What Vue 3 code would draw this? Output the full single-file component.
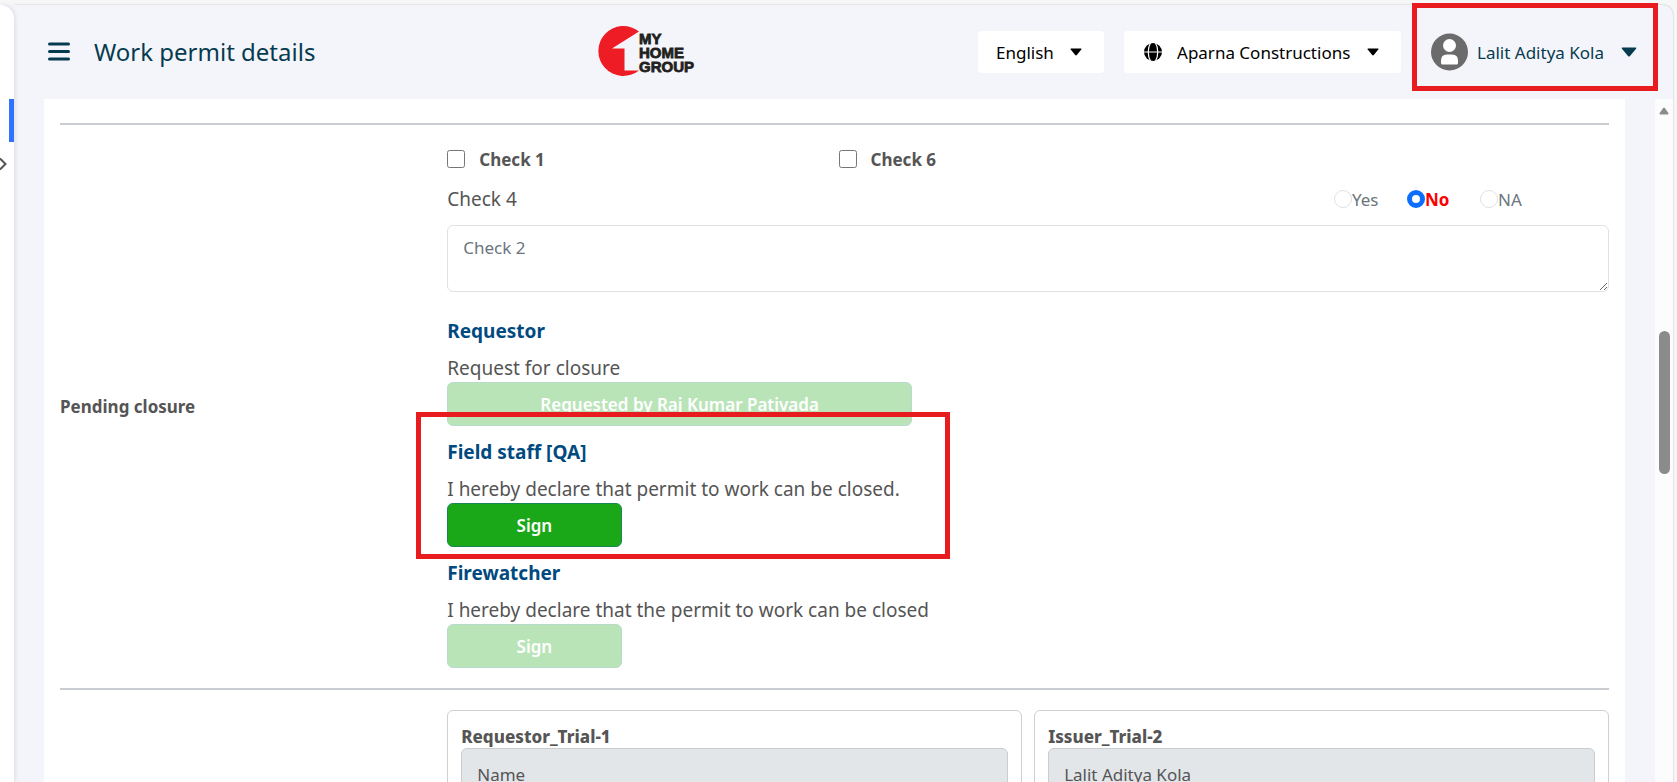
<script setup>
import { ref } from 'vue'

const language = ref('English')
const company = ref('Aparna Constructions')
const answer = ref('No')
const remarks = ref('Check 2')
const checks = ref([
  { id: 'check-1', label: 'Check 1', done: false },
  { id: 'check-6', label: 'Check 6', done: false },
])
const answers = ['Yes', 'No', 'NA']
const signers = [
  { role: 'Requestor', text: 'Request for closure', action: 'Requested by Raj Kumar Pativada', wide: true, disabled: true },
  { role: 'Field staff [QA]', text: 'I hereby declare that permit to work can be closed.', action: 'Sign', disabled: false, marked: true },
  { role: 'Firewatcher', text: 'I hereby declare that the permit to work can be closed', action: 'Sign', disabled: true },
]
const people = [
  { id: 'requestor', title: 'Requestor_Trial-1', name: 'Name' },
  { id: 'issuer', title: 'Issuer_Trial-2', name: 'Lalit Aditya Kola' },
]
</script>

<template>
  <div class="shell">
    <aside class="sidebar">
      <span class="sidebar-active"></span>
      <button class="sidebar-expand" type="button" aria-label="Expand">
        <svg width="8" height="14" viewBox="0 0 8 14"><path d="M0 1.500 L5.500 7 L0 12.500" fill="none" stroke="#555" stroke-width="2" /></svg>
      </button>
    </aside>

    <div class="main">
      <header class="header">
        <div class="heading">
          <button class="menu" type="button" aria-label="Menu">
            <svg width="22" height="20" viewBox="0 0 22 20"><path d="M1.500 2h19M1.500 9.500h19M1.500 17h19" stroke="#063b4f" stroke-width="3" stroke-linecap="round" /></svg>
          </button>
          <h1>Work permit details</h1>
        </div>

        <svg class="logo" width="97" height="52" viewBox="0 0 97 52" role="img" aria-label="My Home Group">
          <path d="M41 5.500 A25 25 0 1 0 41 44.500 H26.500 V22.500 H14 Z" fill="#ee1c25" />
          <g class="logo-text">
            <text x="41" y="18">MY</text>
            <text x="41" y="32">HOME</text>
            <text x="41" y="46">GROUP</text>
          </g>
        </svg>

        <div class="tools">
          <div class="picker">
            <select v-model="language" aria-label="Language">
              <option>English</option>
            </select>
            <svg class="caret" width="12" height="8" viewBox="0 0 12 8"><path d="M1.200.5h9.600q1.200 0 .5 1L6.800 7q-.8.8-1.600 0L.7 1.500Q0 .5 1.200.5Z" /></svg>
          </div>
          <div class="picker">
            <svg class="globe" width="18" height="18" viewBox="0 0 18 18">
              <circle cx="9" cy="9" r="9" />
              <path d="M0 9h18M6.500 0C3.500 5 3.500 13 6.500 18M11.500 0c3 5 3 13 0 18" fill="none" stroke="#fff" stroke-width="1.200" />
            </svg>
            <select v-model="company" aria-label="Company">
              <option>Aparna Constructions</option>
            </select>
            <svg class="caret" width="12" height="8" viewBox="0 0 12 8"><path d="M1.200.5h9.600q1.200 0 .5 1L6.800 7q-.8.8-1.600 0L.7 1.500Q0 .5 1.200.5Z" /></svg>
          </div>
          <button class="user" type="button">
            <svg width="37" height="38" viewBox="0 0 37 38">
              <circle cx="18.500" cy="19" r="18.500" fill="#6b6b6b" />
              <circle cx="18.500" cy="12.500" r="6.500" fill="#fff" />
              <path d="M10 30v-2.500q0-6 6-6h5q6 0 6 6V30q0 1.500-1.500 1.500h-14Q10 31.500 10 30Z" fill="#fff" />
            </svg>
            <span>Lalit Aditya Kola</span>
            <svg class="user-caret" width="16" height="10" viewBox="0 0 16 10"><path d="M1.500.5h13q1.500 0 .6 1.200L9 9q-1 1-2 0L.9 1.700Q0 .5 1.500.5Z" fill="#063b4f" /></svg>
          </button>
        </div>
      </header>

      <div class="body">
        <main class="panel">
          <section class="row">
            <h2 class="row-title">Pending closure</h2>
            <div class="row-content">
              <div class="checks">
                <label v-for="c in checks" :key="c.id" class="check">
                  <input v-model="c.done" type="checkbox" />
                  <span>{{ c.label }}</span>
                </label>
              </div>

              <div class="question">
                <span id="question-label">Check 4</span>
                <div class="answers" role="radiogroup" aria-labelledby="question-label">
                  <label v-for="a in answers" :key="a" :class="{ chosen: a === answer }">
                    <input v-model="answer" type="radio" name="check-4" :value="a" />{{ a }}
                  </label>
                </div>
              </div>

              <textarea v-model="remarks" class="remarks" aria-label="Check 2"></textarea>

              <div class="signers">
                <div v-for="s in signers" :key="s.role" class="signer" :class="{ marked: s.marked }">
                  <h3>{{ s.role }}</h3>
                  <p>{{ s.text }}</p>
                  <button type="button" :class="{ wide: s.wide }" :disabled="s.disabled">{{ s.action }}</button>
                </div>
              </div>
            </div>
          </section>

          <section class="row">
            <div></div>
            <div class="people">
              <div v-for="p in people" :key="p.id" class="person">
                <label :for="p.id">{{ p.title }}</label>
                <input :id="p.id" type="text" :value="p.name" disabled />
              </div>
            </div>
          </section>
        </main>

        <div class="scrollbar" aria-hidden="true">
          <svg width="10" height="8" viewBox="0 0 10 8"><path d="M5 1.500 L8.500 6.500 H1.500Z" fill="#8b8b8b" stroke="#8b8b8b" stroke-width="2" stroke-linejoin="round" /></svg>
          <span class="thumb"></span>
        </div>
      </div>
    </div>
  </div>
</template>

<style>
body {
  margin: 0;
  background: #f7f7f7;
}
</style>

<style scoped>
*,
*::before,
*::after {
  box-sizing: border-box;
}
.shell {
  display: flex;
  height: 100vh;
  padding: 5px 4px 0 0;
  overflow: hidden;
  font-family: "Noto Sans", "Open Sans", sans-serif;
  color: #555;
}
button,
select,
input,
textarea {
  font: inherit;
  color: inherit;
}
.sidebar {
  flex: none;
  position: relative;
  z-index: 1;
  display: flex;
  flex-direction: column;
  width: 14px;
  padding-top: 94px;
  background: #fff;
  border-radius: 0 16px 0 0;
  box-shadow: 1px 0 5px rgba(60, 70, 100, 0.14);
}
.shell::before {
  content: "";
  position: absolute;
  z-index: 0;
  width: 20px;
  height: 40px;
  background: #f4f5fa;
}
.sidebar-active {
  width: 5px;
  height: 43px;
  margin-left: auto;
  background: #2f74ff;
}
.sidebar-expand {
  display: flex;
  width: 8px;
  margin-top: 15px;
  padding: 0;
  border: 0;
  background: none;
}
.main {
  flex: 1;
  min-width: 0;
  display: flex;
  flex-direction: column;
  background: #f4f5fa;
  border-radius: 0 10px 0 0;
  box-shadow: 0 0 2px rgba(0, 0, 0, 0.25);
}
.header {
  flex: none;
  display: flex;
  align-items: center;
  justify-content: space-between;
  height: 94px;
  padding: 0 36px 0 34px;
}
.heading {
  display: flex;
  align-items: center;
  gap: 24px;
}
.heading h1 {
  margin: 0;
  font-size: 24px;
  line-height: 32px;
  font-weight: 400;
  color: #063b4f;
  white-space: nowrap;
}
.menu {
  display: flex;
  padding: 0;
  border: 0;
  background: none;
}
.logo-text {
  font: bold 15px "Liberation Sans", Arial, sans-serif;
  fill: #231f20;
  stroke: #231f20;
  stroke-width: 0.8px;
}
.tools {
  display: flex;
  align-items: center;
  gap: 20px;
}
.picker {
  position: relative;
  display: flex;
  align-items: center;
  height: 42px;
  background: #fff;
  border-radius: 4px;
  color: #000;
}
.picker select {
  appearance: none;
  height: 42px;
  padding: 0 50px 0 18px;
  border: 0;
  background: none;
  font-size: 17px;
}
.globe {
  margin-left: 20px;
}
.picker .globe + select {
  padding-left: 15px;
}
.caret {
  position: absolute;
  right: 22px;
  pointer-events: none;
}
.user {
  position: relative;
  display: flex;
  align-items: center;
  gap: 9px;
  margin-left: 10px;
  padding: 0;
  border: 0;
  background: none;
  font-size: 17px;
  color: #063b4f;
  white-space: nowrap;
}
.user-caret {
  margin-left: 8px;
}
.user::after {
  content: "";
  position: absolute;
  inset: -30px -21px -20px -19px;
  border: 5px solid #e81c1f;
}
.body {
  flex: 1;
  min-height: 0;
  display: flex;
  overflow: hidden;
}
.panel {
  flex: 1;
  min-width: 0;
  margin: 0 30px;
  padding: 24px 16px 0;
  background: #fff;
}
.row {
  display: grid;
  grid-template-columns: 1fr 3fr;
  align-items: center;
  padding: 20px 0;
  border-top: 2px solid #c9cdd2;
}
.row-title {
  margin: 0;
  font-size: 17px;
  line-height: 24px;
  font-weight: 700;
}
.row-content {
  min-width: 0;
}
.checks {
  display: grid;
  grid-template-columns: repeat(3, 1fr);
  gap: 12px;
}
.check {
  display: flex;
  align-items: center;
  gap: 14px;
  height: 28px;
  font-size: 17px;
  font-weight: 700;
}
.check input {
  width: 18px;
  height: 18px;
  margin: 0;
}
.question {
  display: flex;
  align-items: center;
  justify-content: space-between;
  height: 40px;
  margin-top: 6px;
  padding-right: 13px;
  font-size: 19px;
}
.answers {
  display: grid;
  grid-template-columns: repeat(3, 73px);
  width: 262px;
  font-size: 17px;
  color: #6c757d;
}
.answers label {
  display: flex;
  align-items: center;
}
.answers .chosen {
  color: #f00;
  font-weight: 700;
}
.answers input {
  appearance: none;
  width: 18px;
  height: 18px;
  margin: 0;
  border: 1px solid #dee2e6;
  border-radius: 50%;
}
.answers input:checked {
  border: 5px solid #0d6efd;
}
.remarks {
  display: block;
  width: 100%;
  height: 67px;
  margin-top: 6px;
  padding: 10px 15px;
  border: 1px solid #dee2e6;
  border-radius: 6px;
  background: #fff;
  font-size: 17px;
  line-height: 24px;
  color: #6c757d;
}
.signers {
  margin-top: 13px;
}
.signer {
  position: relative;
  padding-top: 12px;
}
.signer h3 {
  margin: 0 0 9px;
  font-size: 19px;
  line-height: 28px;
  font-weight: 700;
  color: #004a80;
}
.signer p {
  margin: 0;
  font-size: 19px;
  line-height: 28px;
}
.signer button {
  display: block;
  width: 15%;
  height: 44px;
  border: 1px solid #198754;
  border-radius: 6px;
  background: #1ba818;
  font-size: 17px;
  font-weight: 600;
  color: #fff;
}
.signer button.wide {
  width: 40%;
}
.signer button:disabled {
  opacity: 0.3;
}
.marked::after {
  content: "";
  position: absolute;
  top: -14px;
  bottom: -12px;
  left: -31px;
  width: 534px;
  border: 5px solid #e81c1f;
  pointer-events: none;
}
.people {
  display: grid;
  grid-template-columns: 1fr 1fr;
  gap: 12px;
}
.person {
  padding: 14px 13px;
  border: 1px solid #ced0d3;
  border-radius: 6px;
}
.person label {
  display: block;
  font-size: 17px;
  line-height: 23px;
  font-weight: 800;
}
.person input {
  display: block;
  width: 100%;
  height: 52px;
  padding: 0 15px;
  border: 1px solid #c9cdd1;
  border-radius: 6px;
  background: #e2e6e9;
  font-size: 17px;
}
.scrollbar {
  flex: none;
  display: flex;
  flex-direction: column;
  align-items: center;
  width: 18px;
  padding-top: 8px;
  background: #fcfcfc;
}
.thumb {
  width: 11px;
  height: 143px;
  margin-top: 216px;
  border-radius: 6px;
  background: #8b8b8b;
}
</style>
